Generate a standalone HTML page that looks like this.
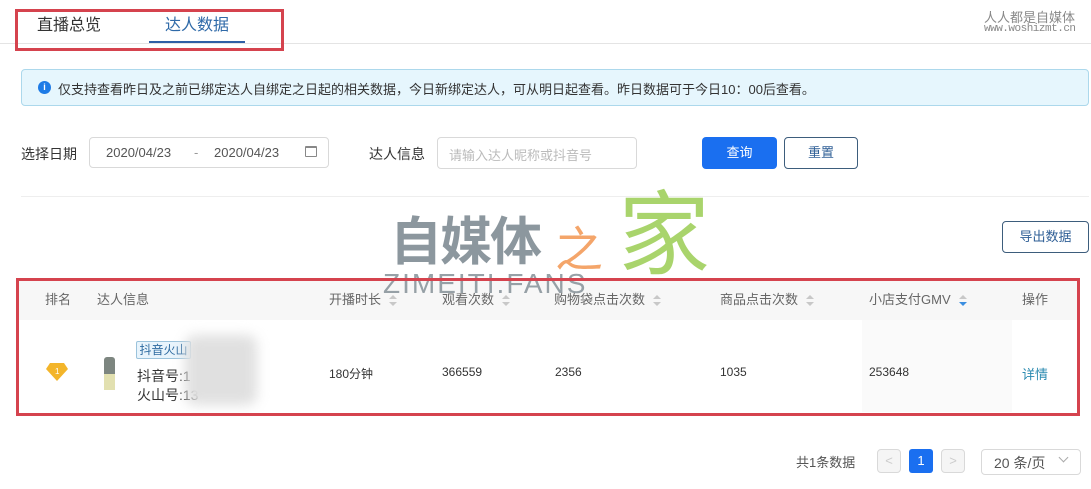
<!DOCTYPE html><html><head><meta charset="utf-8"><style>
*{margin:0;padding:0;box-sizing:border-box}
body{width:1091px;height:489px;background:#fff;font-family:"Liberation Sans","Noto Sans CJK SC",sans-serif;color:#333;position:relative;overflow:hidden;font-size:13px}
.a{position:absolute;white-space:nowrap}
.box{position:absolute;border:1px solid #d9d9d9;border-radius:4px}
.sort{display:inline-block;width:8px;height:12px;vertical-align:middle;margin-left:8px;position:relative}
.sort:before{content:"";position:absolute;left:0;top:0;border:4px solid transparent;border-bottom:4px solid #c8c8c8;border-top:0}
.sort:after{content:"";position:absolute;left:0;top:7px;border:4px solid transparent;border-top:4px solid #c8c8c8;border-bottom:0}
.sort.b:after{border-top-color:#3b8ee0}
</style></head><body>
<div class="a" style="left:0;top:43px;width:1091px;height:1px;background:#e4e4e4"></div>
<div class="a" style="left:37px;top:11px;font-size:16px;color:#333">直播总览</div>
<div class="a" style="left:165px;top:11px;font-size:16px;color:#2f6aa8">达人数据</div>
<div class="a" style="left:149px;top:41px;width:96px;height:2px;background:#2f5fa5"></div>
<div class="a" style="left:15px;top:9px;width:269px;height:42px;border:3px solid #d5434e"></div>
<div class="a" style="left:984px;top:7px;font-size:13px;color:#888">人人都是自媒体</div>
<div class="a" style="left:984px;top:23px;font-size:11px;color:#888;font-family:'Liberation Mono',monospace;letter-spacing:-0.5px">www.woshizmt.cn</div>

<div class="a" style="left:21px;top:69px;width:1068px;height:37px;background:#e6f6fd;border:1px solid #acd8ec;border-radius:4px"></div>
<div class="a" style="left:38px;top:81px;width:13px;height:13px;border-radius:50%;background:#1e7be6;color:#fff;font-size:9px;text-align:center;line-height:13px;font-weight:bold">i</div>
<div class="a" style="left:58px;top:79px;font-size:13px;color:#333">仅支持查看昨日及之前已绑定达人自绑定之日起的相关数据，今日新绑定达人，可从明日起查看。昨日数据可于今日10：00后查看。</div>

<div class="a" style="left:21px;top:144px;font-size:14px">选择日期</div>
<div class="box" style="left:89px;top:137px;width:240px;height:31px"></div>
<div class="a" style="left:106px;top:145px;font-size:13px;color:#555">2020/04/23</div>
<div class="a" style="left:194px;top:145px;color:#999">-</div>
<div class="a" style="left:214px;top:145px;font-size:13px;color:#555">2020/04/23</div>
<div class="a" style="left:305px;top:146px;width:12px;height:11px;border:1px solid #888;border-top-width:2px;border-radius:1px"></div>
<div class="a" style="left:369px;top:144px;font-size:14px">达人信息</div>
<div class="box" style="left:437px;top:137px;width:200px;height:32px"></div>
<div class="a" style="left:449px;top:145px;font-size:13px;color:#bbb">请输入达人昵称或抖音号</div>
<div class="a" style="left:702px;top:137px;width:75px;height:32px;background:#1a6ff0;border-radius:4px;color:#fff;text-align:center;line-height:32px;font-size:13px">查询</div>
<div class="a" style="left:784px;top:137px;width:74px;height:32px;border:1px solid #3d5d7c;border-radius:4px;color:#2f5f96;text-align:center;line-height:30px;font-size:13px">重置</div>
<div class="a" style="left:21px;top:196px;width:1068px;height:1px;background:#eee"></div>
<div class="a" style="left:1002px;top:221px;width:87px;height:32px;border:1px solid #3d5d7c;border-radius:4px;color:#2f5f96;text-align:center;line-height:30px;font-size:13px">导出数据</div>

<div class="a" style="left:18px;top:280px;width:1060px;height:40px;background:#f7f7f7"></div>
<div class="a" style="left:862px;top:320px;width:150px;height:92px;background:#fafafa"></div>
<div class="a" style="left:390px;top:200px;font-size:52px;font-weight:bold;color:#8c979e;letter-spacing:-2px">自媒体</div>
<div class="a" style="left:555px;top:210px;font-size:48px;color:#f4a56a">之</div>
<div class="a" style="left:618px;top:186px;font-size:92px;color:#a9d46c;line-height:1.1">家</div>
<div class="a" style="left:383px;top:268px;font-size:28px;color:#8c979e;letter-spacing:2px;opacity:.9">ZIMEITI.FANS</div>

<div class="a" style="left:45px;top:289px;font-size:13px;color:#666">排名</div>
<div class="a" style="left:97px;top:289px;font-size:13px;color:#666">达人信息</div>
<div class="a" style="left:329px;top:289px;font-size:13px;color:#666">开播时长<span class="sort"></span></div>
<div class="a" style="left:442px;top:289px;font-size:13px;color:#666">观看次数<span class="sort"></span></div>
<div class="a" style="left:554px;top:289px;font-size:13px;color:#666">购物袋点击次数<span class="sort"></span></div>
<div class="a" style="left:720px;top:289px;font-size:13px;color:#666">商品点击次数<span class="sort"></span></div>
<div class="a" style="left:869px;top:289px;font-size:13px;color:#666">小店支付GMV<span class="sort b"></span></div>
<div class="a" style="left:1022px;top:289px;font-size:13px;color:#666">操作</div>

<svg class="a" style="left:46px;top:363px" width="22" height="18" viewBox="0 0 22 18"><path d="M4 0H18L22 6L11 18L0 6Z" fill="#f3b52a"/><text x="9" y="11" font-size="8" fill="#fff" font-family="Liberation Sans">1</text></svg>
<div class="a" style="left:104px;top:357px;width:11px;height:17px;background:#7d8680;border-radius:3px 3px 0 0"></div>
<div class="a" style="left:104px;top:374px;width:11px;height:16px;background:#e2e0b0"></div>
<div class="a" style="left:136px;top:341px;width:55px;height:18px;background:#e8f4fc;border:1px solid #9bc3dc;color:#2d6aa0;font-size:12px;text-align:center;line-height:16px;border-radius:2px">抖音火山</div>
<div class="a" style="left:137px;top:366px;font-size:14px">抖音号:1</div>
<div class="a" style="left:137px;top:385px;font-size:14px">火山号:13</div>
<div class="a" style="left:185px;top:335px;width:72px;height:70px;background:#e0e0e0;filter:blur(6px);border-radius:10px"></div>
<div class="a" style="left:329px;top:365px;font-size:12px">180分钟</div>
<div class="a" style="left:442px;top:365px;font-size:12px">366559</div>
<div class="a" style="left:555px;top:365px;font-size:12px">2356</div>
<div class="a" style="left:720px;top:365px;font-size:12px">1035</div>
<div class="a" style="left:869px;top:365px;font-size:12px">253648</div>
<div class="a" style="left:1022px;top:364px;font-size:13px;color:#2a8ab0">详情</div>
<div class="a" style="left:16px;top:278px;width:1064px;height:138px;border:3px solid #d5434e"></div>

<div class="a" style="left:796px;top:452px;font-size:13px;color:#555">共1条数据</div>
<div class="box" style="left:877px;top:449px;width:24px;height:24px;background:#f5f5f5;color:#ccc;text-align:center;line-height:22px">&lt;</div>
<div class="a" style="left:909px;top:449px;width:24px;height:24px;background:#1a6ff0;border-radius:3px;color:#fff;text-align:center;line-height:24px">1</div>
<div class="box" style="left:941px;top:449px;width:24px;height:24px;background:#f5f5f5;color:#ccc;text-align:center;line-height:22px">&gt;</div>
<div class="box" style="left:981px;top:449px;width:100px;height:26px"></div>
<div class="a" style="left:994px;top:453px;font-size:14px;color:#555">20 条/页</div>
<div class="a" style="left:1060px;top:454px;width:7px;height:7px;border-right:1px solid #aaa;border-bottom:1px solid #aaa;transform:rotate(45deg)"></div>
</body></html>
